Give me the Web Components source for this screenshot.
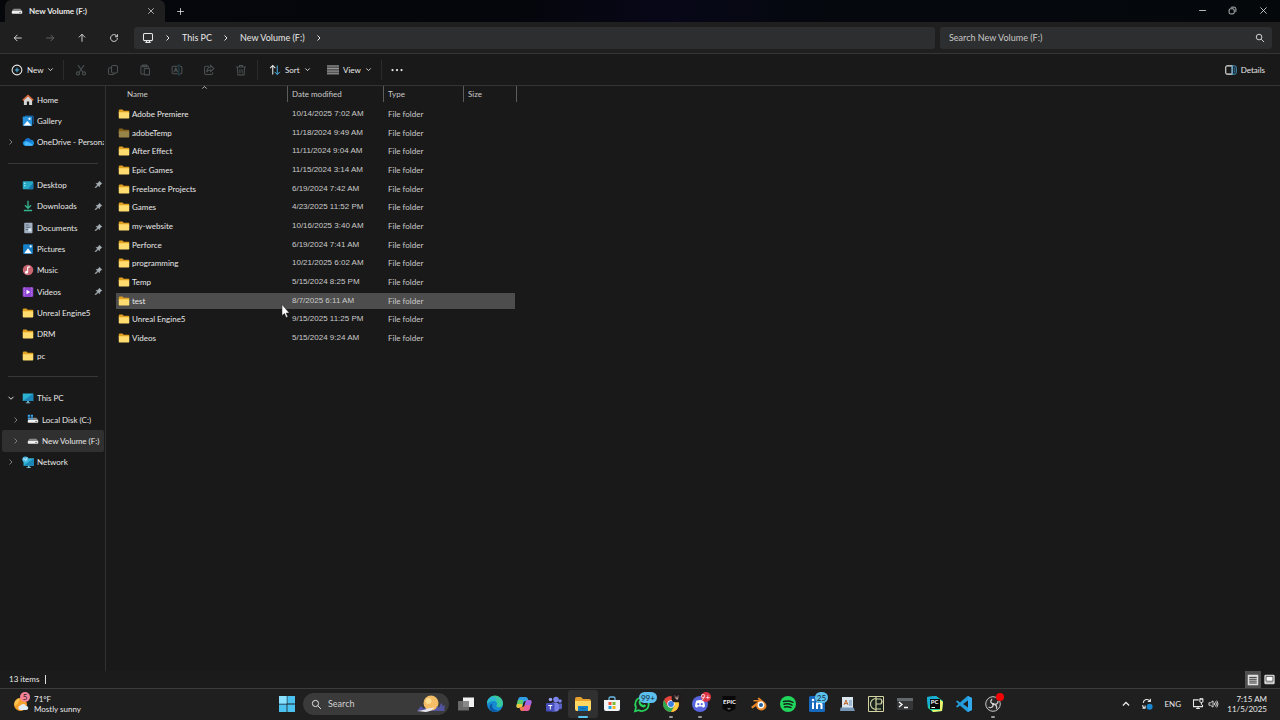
<!DOCTYPE html>
<html lang="en">
  <head>
    <meta charset="UTF-8" />
    <meta name="viewport" content="width=device-width, initial-scale=1.0" />
    <title>New Volume (F:)</title>
    <style>
      :root {
        --line: #343434;
        --panel: #191919;
        --bar: #1f1f1f;
        --field: #2d2e2f;
        --text: #e8e8e8;
        --dim: #cacaca;
        --small: 8px;
        --normal: 9px;
      }
      body {
        margin: 0;
        height: 100vh;
        display: flex;
        flex-direction: column;
        overflow: hidden;
        background: var(--panel);
        color: var(--text);
        font: var(--small) / 12px Lato, "Noto Sans", sans-serif;
      }
      main {
        flex: 1;
        min-height: 0;
        display: flex;
      }
      mouse-pointer {
        position: absolute;
        left: 281px;
        top: 304px;
      }
    </style>
  </head>
  <body>
    <title-bar></title-bar>
    <nav-bar></nav-bar>
    <command-bar></command-bar>
    <main>
      <side-nav></side-nav>
      <file-list></file-list>
    </main>
    <status-bar>13 items</status-bar>
    <task-bar></task-bar>
    <mouse-pointer></mouse-pointer>

    <script>
      const folder = `<path d="M1 3.500Q1 2 2.500 2H6l1.500 1.500H14q1 0 1 1V7H1z" fill="#e0a020"/><path d="M1 5.500h13q1 0 1 1V13q0 1-1 1H2q-1 0-1-1z" fill="#ffdc70"/>`;
      const screen = `<path d="M1 2h14v10H1z" fill="#2cb3d0"/><path d="M1 12 15 2v10z" fill="#1b87b8"/><path d="M7 12h2v2h2v1H5v-1h2z" fill="#86c8dc"/>`;
      const drive = `<path d="M3.500 5h9l2.500 3H1z" fill="#8b8b8b"/><rect x="1" y="8" width="14" height="3.500" rx="1" fill="#f0f0f0"/><path d="M11 9.300h2.500v1H11z" fill="#555"/>`;
      const picture = `<rect x="1.500" y="1.500" width="13" height="13" rx="1" fill="#1680c8"/><path d="M3 13.500 8 7l5 6.500z" fill="#fff"/><circle cx="11.500" cy="4.500" r="1.500" fill="#fff"/>`;

      // every drawing is on a 16x16 grid, line icons take currentColor
      const icons = {
        folder,
        screen,
        drive,
        picture,
        folderDim: `<g opacity=".55">${folder}</g>`,
        home: `<path d="M2.500 7v7.500h4V10h3v4.500h4V7L8 2.500z" fill="#d5d5d5"/><path d="M1 8.500 8 2l7 6.500" fill="none" stroke="#d8683c" stroke-width="2"/>`,
        gallery: `<path d="M4 1.500h10q1 0 1 1V12" fill="none" stroke="#165a9c" stroke-width="1.500"/><rect x="1" y="2" width="12.500" height="12.500" rx="1" fill="#2894df"/><path d="M2 14 7 8l5.500 6z" fill="#fff"/><circle cx="10" cy="5" r="1.500" fill="#fff"/>`,
        cloud: `<path d="M4 13a3.500 3.500 0 0 1-.5-6.800A4.500 4.500 0 0 1 11.500 5a4 4 0 0 1 1 8z" fill="#1490df"/><path d="M4 13a3.500 3.500 0 0 1 2.500-6l8.500 5q-1 1-2.500 1z" fill="#48b8ff"/><path d="M4 6a4.500 4.500 0 0 1 7.500-1L14 7.500 6.500 7z" fill="#1669c8"/>`,
        desktop: `<rect x="1" y="3" width="14" height="10.500" rx="1" fill="#27a9c4"/><path d="M8 13.500 15 5v7.500q0 1-1 1z" fill="#1677ae"/><path d="M3 5h1.500v1.500H3zM3 8h1.500v1.500H3z" fill="#c5f6ff"/>`,
        download: `<path d="M8 1v9.500M4 7l4 4 4-4M2.500 14h11" fill="none" stroke="#34b58d" stroke-width="1.800"/>`,
        document: `<rect x="3" y="1" width="11" height="14" rx="1" fill="#a2afbf"/><path d="M5 4h4M5 7h6M5 10h4" stroke="#52667d" stroke-width="1.200"/><path d="M8.500 8.500h4v4h-4z" fill="#dde8f2"/>`,
        music: `<circle cx="8" cy="8" r="7" fill="#c96672"/><path d="M7.500 11V4.500l3-1" fill="none" stroke="#fff" stroke-width="1.500"/><circle cx="6" cy="11" r="2" fill="#fff"/>`,
        video: `<rect x="1" y="1.500" width="14" height="13" rx="1.500" fill="#9146d3"/><path d="M3 2v12M13 2v12" stroke="#d4abf0" stroke-dasharray="1.500 1.500"/><path d="m6 5 5 3-5 3z" fill="#fff"/>`,
        system: `${drive}<path d="M1 1h3v2.500H1zM5 1h3v2.500H5zM1 4.500h3V7H1zM5 4.500h3V7H5z" fill="#3ba4ee"/>`,
        network: `<g transform="translate(1 1)">${screen}</g><circle cx="4.500" cy="4.500" r="4" fill="#4cb9e5"/><path d="M1 4h3l1 2 2-4" fill="none" stroke="#dff7ff"/>`,
        pin: `<path d="m9.500 2 4.500 4.500-1.500.5-2.200 2.200-.5 3-2.500-2.500L3 14l-1-1 4.300-4.300-2.500-2.500 3-.5L9 3.500z" fill="#a7b0b4" stroke="#a7b0b4"/>`,
        left: `<path d="M14 8H2m5-5L2 8l5 5" class="line"/>`,
        right: `<path d="M2 8h12M9 3l5 5-5 5" class="line"/>`,
        up: `<path d="M8 14V2M3 7l5-5 5 5" class="line"/>`,
        reload: `<path d="M13.500 8a5.500 5.500 0 1 1-2-4.200L13.500 6M13.500 2v4h-4" class="line"/>`,
        chevronRight: `<path d="m5 3 5 5-5 5" class="line bold"/>`,
        chevronDown: `<path d="m3 5.500 5 5 5-5" class="line bold"/>`,
        chevronUp: `<path d="m3 10.500 5-5 5 5" class="line bold"/>`,
        close: `<path d="m2.500 2.500 11 11m0-11-11 11" class="line"/>`,
        plus: `<path d="M8 2v12M2 8h12" class="line"/>`,
        minus: `<path d="M2 8h12" class="line"/>`,
        restore: `<rect x="2" y="5" width="9" height="9" rx="2" class="line"/><path d="M5 3q.5-1 2-1h4q3 0 3 3v4q0 1.500-1 2" class="line"/>`,
        search: `<circle cx="6.500" cy="6.500" r="4.500" class="line"/><path d="m10 10 4.500 4.500" class="line"/>`,
        monitor: `<rect x="2" y="2" width="12" height="9.500" rx="1.500" class="line"/><path d="M6 11.500V14M10 11.500V14M4.500 14h7" class="line"/>`,
        add: `<circle cx="8" cy="8" r="6.500" class="line"/><path d="M8 5v6M5 8h6" stroke="#4db2e8" stroke-width="1.400"/>`,
        cut: `<path d="M4 1.500 10.500 11M12 1.500 5.500 11" class="line"/><circle cx="4" cy="12.500" r="2" class="line"/><circle cx="12" cy="12.500" r="2" class="line"/>`,
        copy: `<rect x="6" y="2" width="8" height="10" rx="2" class="line"/><path d="M6 5H4Q2 5 2 7v5q0 2 2 2h4q2 0 2-2" class="line"/>`,
        paste: `<path d="M6 13.500H4q-1.500 0-1.500-1.500V4Q2.500 2.500 4 2.500h1m5 0h1q1.500 0 1.500 1.500v1M5 1.500h5v2H5z" class="line"/><rect x="7" y="6" width="7" height="8.500" rx="1" class="line"/>`,
        rename: `<path d="M9 3H3Q1.500 3 1.500 4.500v7Q1.500 13 3 13h6m3-10h1q1.500 0 1.500 1.500v7q0 1.500-1.500 1.500h-1M4 11l2.500-6L9 11M5 9h3" class="line"/><path d="M9 1.500h3m-1.500 0v13M9 14.500h3" stroke="#215866" fill="none"/>`,
        share: `<path d="M8 3H4Q2 3 2 5v7q0 2 2 2h7q2 0 2-2v-1M10 2l4.500 4L10 10V8q-4 0-5 3 0-6 5-7z" class="line"/>`,
        trash: `<path d="M1.500 4h13M6 4V2h4v2M3 4l1 10.500h8L13 4M6.500 7v5M9.500 7v5" class="line"/>`,
        sort: `<path d="M5 14V2M1.500 5.500 5 2l3.500 3.500" class="line"/><path d="M11 2v12m-3.500-3.500L11 14l3.500-3.500" fill="none" stroke="#4db2e8" stroke-width="1.300"/>`,
        view: `<path d="M0 2h16v12H0z" fill="#555"/><path d="M0 2.500h16M0 6h16M0 9.500h16M0 13h16" stroke="#aaa"/>`,
        dots: `<g fill="currentColor"><circle cx="2" cy="8" r="1.500"/><circle cx="8" cy="8" r="1.500"/><circle cx="14" cy="8" r="1.500"/></g>`,
        details: `<path d="M9.500 2.500H3Q1 2.500 1 4.500v7q0 2 2 2h6.500z" class="line"/><path d="M9.500 2.500H13q2 0 2 2v7q0 2-2 2H9.500zM11.500 5.500h1.800M11.500 8h1.800M11.500 10.500h1.800" fill="none" stroke="#45a6d8" stroke-width="1.200"/>`,
        list: `<rect x="1" y="1" width="14" height="14" fill="#e0e0e0"/><path d="M3 4.500h10M3 7h10M3 9.500h10M3 12h10" stroke="#222" stroke-width="1.200"/>`,
        tiles: `<rect x="1.500" y="2" width="13" height="12" rx="1" fill="#fff" stroke="#d6d6d6" stroke-width="2"/><path d="M3 3.500h10v7H3z" fill="none" stroke="#222"/><path d="M3 12.500h10" stroke="#888"/>`,
        sync: `<path d="M3 6.500a5 5 0 0 1 9-2.500M12.500 1v3.500H9M2 9.500a5 5 0 0 0 3 4M2 13.500h3.500V10" class="line"/><circle cx="11.500" cy="11.500" r="4" fill="#1987cf"/>`,
        ethernet: `<path d="M9 2.500H2v9h12V9M5.500 14h5M8 11.500V14M12.500 6v3M10.500 1.500h4V5q-2 2-4 0zM11.500 0v2M13.500 0v2" class="line"/>`,
        speaker: `<path d="M1.500 6H4l4-3v10l-4-3H1.500z" class="line"/><path d="M10 6q1.500 2 0 4M12 4q3 4 0 8M14 2.500q4 5.500 0 11" class="line"/>`,
        weather: `<circle cx="7.500" cy="8.500" r="6.500" fill="#f5a02d"/><path d="M1.500 10a6.500 6.500 0 0 1 5-8q0 6-5 8z" fill="#ffc34d"/><path d="M7 14a2.300 2.300 0 0 1 .5-4.500 3 3 0 0 1 5.500.5 2 2 0 0 1 .5 4z" fill="#e2ecf7"/>`,
        start: `<path d="M0 0h7.600v7.600H0zM8.400 0H16v7.600H8.400zM0 8.400h7.600V16H0zM8.400 8.400H16V16H8.400z" fill="#4cc2f1"/><path d="M0 0h7.600v7.600H0z" fill="#8be2ff"/>`,
        taskview: `<rect x="5" y="1.500" width="11" height="9.500" fill="#f1f1f1"/><rect x="0" y="5" width="11" height="9.500" fill="#777" opacity=".85"/>`,
        edge: `<circle cx="8" cy="8" r="8" fill="#168bd2"/><path d="M0 8a8 8 0 0 1 16-1c.3 3-2 4.500-4.500 4.200-2-.2-2.500-1.200-1.700-2.200C11 7 9 4.800 6.500 5 3 5 .5 7 0 8z" fill="#39c99c"/><path d="M0 8a8 8 0 0 1 5-7.400C9 1 11 4 9 5 3 4 1 6 0 8z" fill="#2cb8d4"/><path d="M6 7.500c-2.500 2.500 0 7 5.500 7q-3 2-6 1C1 13 2 8 6 7.500z" fill="#0c56a3"/>`,
        copilot: `<path d="M4.500 1h5q2 0 2.500 2l.5 2H9.500q-1.500 0-2 1.500L6 11q-.5 1-2 1H2.500Q0 12 .7 9l1.500-6q.5-2 2.300-2z" fill="#2f9fe8"/><path d="M2 4h5.500L6 11q-.5 1-2 1H2.500Q0 12 .7 9z" fill="#5fcb68"/><path d="M1 8h5.500L6 11q-.5 1-2 1H2.500Q0 12 .7 9z" fill="#e9c840"/><path d="M11.500 15h-5q-2 0-2.500-2l-.5-2h3q1.500 0 2-1.500L10 5q.5-1 2-1h1.500q2.500 0 1.800 3l-1.500 6q-.5 2-2.300 2z" fill="#e65f9a"/><path d="M10 5q.5-1 2-1h1.500q2.500 0 1.800 3l-.5 2H8.700z" fill="#a067e6"/><path d="M3.500 11h3q1.500 0 2-1.500L8 13.500 6 15q-1.500 0-2-2z" fill="#f07a4a"/>`,
        teams: `<circle cx="10" cy="3.500" r="2.800" fill="#7d85ed"/><circle cx="4.500" cy="3.500" r="1.800" fill="#9aa0f2"/><circle cx="14" cy="5" r="1.800" fill="#7d85ed"/><rect x="4" y="6.500" width="9" height="9" rx="3" fill="#777fe6"/><path d="M13 7.500h3V12q-1 2-3 1z" fill="#5961c6"/><rect x="0" y="7" width="8.500" height="8.500" rx="1" fill="#454eb9"/><path d="M2.300 9.500h4M4.300 9.500v4" stroke="#fff"/>`,
        explorer: `<path d="M0 3q0-2 2-2h4l2 2h6q2 0 2 2v4H0z" fill="#e7a12c"/><path d="M0 5h16v8q0 2-2 2H2q-2 0-2-2z" fill="#ffd762"/><path d="M3 10h10v5H3z" fill="#1681cb"/><path d="M5.500 12.500h5" stroke="#1268a8"/>`,
        store: `<path d="M5 5V2.500Q5 1 6.500 1h3Q11 1 11 2.500V5" fill="none" stroke="#6cbbe9" stroke-width="1.300"/><path d="M0 4h16v9q0 2-2 2H2q-2 0-2-2z" fill="#f2f3f4"/><path d="M4.500 6h3v3h-3z" fill="#ef5032"/><path d="M8.500 6h3v3h-3z" fill="#7eba2d"/><path d="M4.500 10h3v3h-3z" fill="#209fe2"/><path d="M8.500 10h3v3h-3z" fill="#f6b81c"/>`,
        whatsapp: `<path d="M1 15.200 2 11.500a6.800 6.800 0 1 1 2.700 2.700z" fill="none" stroke="#28d35b" stroke-width="1.700"/><path d="M5 4.500q1.500-1 2 1l-.5 1q1 2 3 2.500l1-.8 1.500 1.300q-.5 2-2.500 2Q5 10.500 4.500 6z" fill="#28d35b"/>`,
        chrome: `<circle cx="8" cy="8" r="8" fill="#e8453c"/><path d="M1.100 4A8 8 0 0 0 8 16l3.500-6H4.500z" fill="#2da94f"/><path d="M8 16a8 8 0 0 0 6.900-12H8l3.500 6z" fill="#fdca3a"/><circle cx="8" cy="8" r="3.700" fill="#fff"/><circle cx="8" cy="8" r="2.900" fill="#3d7ddf"/>`,
        profile: `<rect x="1" y="1" width="14" height="14" rx="5" fill="#211a1c"/><path d="m4 4 4 2 4-2-1 5-5 1z" fill="#5d4b49"/><path d="m6 8 3 4 2-4" fill="#c0a394"/>`,
        discord: `<circle cx="8" cy="8" r="8" fill="#5865dc"/><path d="M4.500 4.500Q8 3.500 11.500 4.500 13 7 13 10.500l-2 1.300-1-1.300H6l-1 1.300-2-1.300Q3 7 4.500 4.500z" fill="#fff"/><circle cx="6.300" cy="8.200" r="1.100" fill="#5865dc"/><circle cx="9.700" cy="8.200" r="1.100" fill="#5865dc"/>`,
        epic: `<path d="M1.500 0h13v13L8 16l-6.500-3z" fill="#080808"/><path d="M6 12.500h4l-2 1z" fill="#ddd"/>`,
        blender: `<path d="M0 11 7 5.500H2.500V4H8L6.500 2.500 8 1.500l6 5q3 3.500 0 6.500-4 3-8-.5L5 10l-3.500 2.500z" fill="#e98728"/><circle cx="10" cy="9" r="3.400" fill="#fff"/><circle cx="10" cy="9" r="2" fill="#235e9d"/>`,
        spotify: `<circle cx="8" cy="8" r="8" fill="#21d65d"/><path d="M3.500 5.500q5-1.500 9.500.8M4 8.300q4-1.200 8 .8M4.500 11q3.500-1 6.500.7" fill="none" stroke="#142318" stroke-width="1.500" stroke-linecap="round"/>`,
        linkedin: `<rect width="16" height="16" rx="1.500" fill="#1769bd"/><path d="M3 6.500h2V13H3zM7 6.500h2v1q2.500-2.500 4.500.5v5h-2V9q-1.500-2-2.500 0v4H7z" fill="#fff"/><circle cx="4" cy="4" r="1.300" fill="#fff"/>`,
        notepad: `<path d="M3 1h11v11H3z" fill="#d9e6ef"/><path d="M1.500 11.500h13L16 15H1z" fill="#7795b5"/><path d="m5 9 2-5 2 5M5.500 7.500h3" stroke="#c06b2f" fill="none"/><path d="M10 5h3M10 7h3M10 9h3" stroke="#638ab2"/>`,
        clip: `<path d="M.5.500h15v15H.5z" fill="#17231c" stroke="#d5d2a5"/><path d="M8 2.500a5.500 5.500 0 1 0 0 11M8 1v14M8 3h5M8 8h5M8 13h5M13 3q2 2.500 0 5" fill="none" stroke="#d5d2a5" stroke-width="1.200"/>`,
        terminal: `<rect y="2" width="16" height="12" rx="1" fill="#343638"/><path d="M0 2h16v3H0z" fill="#64676b"/><path d="m2 6 3 2.500L2 11M7 11.500h4" fill="none" stroke="#fff" stroke-width="1.300"/>`,
        pycharm: `<path d="M0 1 9 0l7 5-1 10-9 1-5-4z" fill="#25d4a0"/><path d="M0 1 9 0l3 3-9 5-2 4z" fill="#16aed9"/><path d="m12 3 4 3-1 9-9 1-1-2h8z" fill="#eff36b"/><rect x="3" y="3" width="10" height="10" fill="#080808"/><path d="M4.500 11.500H8" stroke="#fff"/>`,
        vscode: `<path d="M11.500 0 16 2v12l-4.500 2L4 9.500 1.500 11.500 0 10.500 2.500 8 0 5.500l1.500-1L4 6.500zM12 4.500 7 8l5 3.500z" fill="#249ddd" fill-rule="evenodd"/><path d="M12 0 16 2v12l-4 2z" fill="#31a9ee"/>`,
        obs: `<circle cx="8" cy="8" r="7.300" fill="#282828" stroke="#c8c8c8"/><path d="M7 3q-3 4 1.500 5Q13 9 13 5M8.500 8q-1 5-5 3M8.500 8q4 1 3 5" fill="none" stroke="#c8c8c8" stroke-width="1.300"/><circle cx="8" cy="8" r="1" fill="#ddd"/>`,
      };

      class FxIcon extends HTMLElement {
        connectedCallback() {
          const shadow = this.attachShadow({ mode: "open" });
          const size = this.getAttribute("size") || 12;
          shadow.innerHTML = `
            <style>
              :host { display: inline-block; flex: none; width: ${size}px; height: ${size}px; }
              svg { display: block; width: 100%; height: 100%; overflow: visible; }
              .line { fill: none; stroke: currentColor; stroke-width: 1.400; }
              .bold { stroke-width: 2; }
            </style>
            <svg viewBox="0 0 16 16" aria-hidden="true">${icons[this.getAttribute("name")]}</svg>
          `;
        }
      }
      customElements.define("fx-icon", FxIcon);

      const icon = (name, size = 12) => `<fx-icon name="${name}" size="${size}"></fx-icon>`;

      const controls = `
        * { box-sizing: border-box; }
        button, input {
          border: 0;
          padding: 0;
          margin: 0;
          background: none;
          color: inherit;
          font: inherit;
        }
        button { display: flex; align-items: center; justify-content: center; }
        a { color: inherit; text-decoration: none; }
      `;

      class TitleBar extends HTMLElement {
        constructor() {
          super();
          this.attachShadow({ mode: "open" }).innerHTML = `
            <style>
              ${controls}
              :host {
                display: flex;
                height: 22px;
                padding-left: 5px;
                background: linear-gradient(90deg, #05070b, #05060b 40%, #070718 52%, #05080d 65%, #05080b);
              }
              .tab {
                display: flex;
                align-items: center;
                width: 160px;
                padding: 0 8px 0 6px;
                gap: 6px;
                border-radius: 6px 6px 0 0;
                background: var(--bar);
                font-weight: 700;
              }
              .tab span { flex: 1; }
              .tab button { width: 12px; height: 12px; }
              .new { width: 30px; }
              .window { display: flex; margin-left: auto; height: 20px; }
              .window button { width: 30px; }
              .window button:last-child { width: 32px; }
              .window { padding-right: 1px; }
            </style>
            <div class="tab">${icon("drive")}<span>New Volume (F:)</span><button aria-label="Close tab">${icon("close", 8)}</button></div>
            <button class="new" aria-label="New tab">${icon("plus", 9)}</button>
            <div class="window">
              <button aria-label="Minimize">${icon("minus", 9)}</button>
              <button aria-label="Restore">${icon("restore", 9)}</button>
              <button aria-label="Close">${icon("close", 9)}</button>
            </div>
          `;
        }
      }
      customElements.define("title-bar", TitleBar);

      class NavBar extends HTMLElement {
        constructor() {
          super();
          this.attachShadow({ mode: "open" }).innerHTML = `
            <style>
              ${controls}
              :host {
                display: flex;
                align-items: center;
                height: 32px;
                box-sizing: border-box;
                padding: 0 8px 0 2px;
                background: var(--bar);
                border-bottom: 1px solid var(--line);
                font-size: var(--normal);
              }
              .go { width: 32px; height: 22px; }
              .go:disabled { color: #6c6c6c; }
              .address, .search {
                display: flex;
                align-items: center;
                height: 22px;
                border-radius: 3px;
                background: var(--field);
              }
              .address { flex: 1; margin-left: 4px; padding-left: 8px; gap: 10px; }
              .search { width: 332px; margin-left: 5px; padding: 0 7px 0 9px; }
              input { flex: 1; min-width: 0; outline: 0; }
              input::placeholder { color: #c8c8c8; opacity: 1; }
            </style>
            <button class="go" aria-label="Back">${icon("left", 10)}</button>
            <button class="go" aria-label="Forward" disabled>${icon("right", 10)}</button>
            <button class="go" aria-label="Up">${icon("up", 10)}</button>
            <button class="go" aria-label="Refresh">${icon("reload", 10)}</button>
            <nav class="address" aria-label="Address">
              ${icon("monitor")}${icon("chevronRight", 8)}
              <a href="#pc">This PC</a>${icon("chevronRight", 8)}
              <a href="#f">New Volume (F:)</a>${icon("chevronRight", 8)}
            </nav>
            <label class="search">
              <input type="text" placeholder="Search New Volume (F:)" aria-label="Search New Volume (F:)" />
              ${icon("search", 10)}
            </label>
          `;
        }
      }
      customElements.define("nav-bar", NavBar);

      class CommandBar extends HTMLElement {
        constructor() {
          super();
          const tools = ["cut", "copy", "paste", "rename", "share", "trash"];
          this.attachShadow({ mode: "open" }).innerHTML = `
            <style>
              ${controls}
              :host {
                display: flex;
                align-items: center;
                height: 32px;
                box-sizing: border-box;
                padding: 0 15px 0 6px;
                border-bottom: 1px solid var(--line);
              }
              button { height: 24px; gap: 4px; }
              .new, .sort, .view { justify-content: start; }
              .new { width: 57px; padding-left: 5px; }
              .tool { width: 32px; color: #4b5052; }
              .sort { width: 58px; padding-left: 10px; }
              .view { width: 64px; padding-left: 10px; }
              .more { width: 28px; }
              .details { margin-left: auto; }
              i { width: 1px; height: 20px; margin-right: 1px; background: #2b2b2b; }
            </style>
            <button class="new">${icon("add")}New${icon("chevronDown", 7)}</button>
            <i></i>
            ${tools.map((name) => `<button class="tool" aria-label="${name}" disabled>${icon(name)}</button>`).join("")}
            <i></i>
            <button class="sort">${icon("sort")}Sort${icon("chevronDown", 7)}</button>
            <button class="view">${icon("view")}View${icon("chevronDown", 7)}</button>
            <i></i>
            <button class="more" aria-label="See more">${icon("dots")}</button>
            <button class="details">${icon("details")}Details</button>
          `;
        }
      }
      customElements.define("command-bar", CommandBar);

      class SideItem extends HTMLElement {
        connectedCallback() {
          const open = this.getAttribute("open");
          const arrow = open === null ? "" : icon(open === "yes" ? "chevronDown" : "chevronRight", 8);
          this.attachShadow({ mode: "open" }).innerHTML = `
            <style>
              ${controls}
              :host { display: flex; min-width: 0; margin: 0 1px 0 2px; }
              :host([selected]) { background: #303030; border-radius: 2px; }
              a { flex: 1; min-width: 0; display: flex; align-items: center; padding-left: 5px; }
              :host([nested]) a { padding-left: 10px; }
              .arrow { display: flex; width: 15px; color: #7c7c7c; }
              .arrow.yes { color: #ddd; }
              .label { flex: 1; min-width: 0; margin-left: 3px; overflow: hidden; white-space: nowrap; }
              .pin { display: flex; margin-right: 1px; }
            </style>
            <a href="#">
              <span class="arrow ${open}">${arrow}</span>${icon(this.getAttribute("icon"))}
              <span class="label"><slot></slot></span>
              ${this.hasAttribute("pinned") ? `<span class="pin">${icon("pin", 9)}</span>` : ""}
            </a>
          `;
        }
      }
      customElements.define("side-item", SideItem);

      class SideNav extends HTMLElement {
        constructor() {
          super();
          this.attachShadow({ mode: "open" }).innerHTML = `
            <style>
              :host {
                display: block;
                flex: none;
                width: 105px;
                padding-top: 3px;
                border-right: 1px solid #303030;
              }
              nav {
                display: grid;
                grid-auto-rows: 1fr;
                height: 384px;
              }
              hr { align-self: center; width: 90px; margin: 0 0 0 8px; border: 0; border-top: 1px solid #383838; }
            </style>
            <nav>
              <side-item icon="home">Home</side-item>
              <side-item icon="gallery">Gallery</side-item>
              <side-item icon="cloud" open="no">OneDrive - Persona</side-item>
              <hr />
              <side-item icon="desktop" pinned>Desktop</side-item>
              <side-item icon="download" pinned>Downloads</side-item>
              <side-item icon="document" pinned>Documents</side-item>
              <side-item icon="picture" pinned>Pictures</side-item>
              <side-item icon="music" pinned>Music</side-item>
              <side-item icon="video" pinned>Videos</side-item>
              <side-item icon="folder">Unreal Engine5</side-item>
              <side-item icon="folder">DRM</side-item>
              <side-item icon="folder">pc</side-item>
              <hr />
              <side-item icon="screen" open="yes">This PC</side-item>
              <side-item icon="system" open="no" nested>Local Disk (C:)</side-item>
              <side-item icon="drive" open="no" nested selected>New Volume (F:)</side-item>
              <side-item icon="network" open="no">Network</side-item>
            </nav>
          `;
        }
      }
      customElements.define("side-nav", SideNav);

      const files = [
        ["Adobe Premiere", "10/14/2025 7:02 AM"],
        ["adobeTemp", "11/18/2024 9:49 AM", "folderDim"],
        ["After Effect", "11/11/2024 9:04 AM"],
        ["Epic Games", "11/15/2024 3:14 AM"],
        ["Freelance Projects", "6/19/2024 7:42 AM"],
        ["Games", "4/23/2025 11:52 PM"],
        ["my-website", "10/16/2025 3:40 AM"],
        ["Perforce", "6/19/2024 7:41 AM"],
        ["programming", "10/21/2025 6:02 AM"],
        ["Temp", "5/15/2024 8:25 PM"],
        ["test", "8/7/2025 6:11 AM"],
        ["Unreal Engine5", "9/15/2025 11:25 PM"],
        ["Videos", "5/15/2024 9:24 AM"],
      ];

      class FileList extends HTMLElement {
        constructor() {
          super();
          const rows = files.map(([name, date, glyph = "folder"]) => `
            <tr class="${name === "test" ? "hover" : ""}">
              <td><span class="name">${icon(glyph)}${name}</span></td>
              <td class="date">${date}</td><td>File folder</td><td></td>
            </tr>`);
          this.attachShadow({ mode: "open" }).innerHTML = `
            <style>
              :host { display: block; flex: 1; padding-left: 10px; }
              table { table-layout: fixed; width: 401px; height: 262px; border-collapse: separate; border-spacing: 0; }
              th, td { box-sizing: border-box; padding: 0 0 0 4px; text-align: left; white-space: nowrap; }
              th { height: 19px; padding-bottom: 4px; font-weight: 400; color: var(--dim); position: relative; }
              th::after { content: ""; position: absolute; right: 0; top: 0; width: 1px; height: 16px; background: #5c5c5c; }
              th:first-child { padding-left: 11px; }
              th fx-icon { position: absolute; left: 85px; top: -2px; }
              td { color: var(--dim); border: 0 solid transparent; border-width: 1px 0 2px; background-clip: padding-box; }
              td:first-child { padding-left: 2px; color: var(--text); }
              td:last-child { border-right-width: 2px; }
              .date { font-family: "Liberation Sans", sans-serif; }
              .hover td { background-color: #4d4d4d; }
              .name { display: flex; align-items: center; gap: 2px; }
            </style>
            <table>
              <colgroup><col style="width: 172px" /><col style="width: 96px" /><col style="width: 80px" /><col /></colgroup>
              <thead><tr><th>Name${icon("chevronUp", 7)}</th><th>Date modified</th><th>Type</th><th>Size</th></tr></thead>
              <tbody>${rows.join("")}</tbody>
            </table>
          `;
        }
      }
      customElements.define("file-list", FileList);

      class StatusBar extends HTMLElement {
        constructor() {
          super();
          this.attachShadow({ mode: "open" }).innerHTML = `
            <style>
              ${controls}
              :host { display: flex; align-items: center; height: 17px; padding: 0 3px 0 9px; background: #1b1b1b; }
              .count { padding-right: 6px; border-right: 1px solid #ddd; line-height: 9px; }
              .modes { display: flex; margin-left: auto; height: 100%; }
              button { width: 16px; }
              .on { background: #505050; }
            </style>
            <span class="count"><slot></slot></span>
            <div class="modes">
              <button class="on" aria-label="Details view">${icon("list")}</button>
              <button aria-label="Large icons">${icon("tiles", 11)}</button>
            </div>
          `;
        }
      }
      customElements.define("status-bar", StatusBar);

      // icon, badge text, badge kind, running mark
      const apps = [
        ["taskview"], ["edge"], ["copilot"], ["teams"],
        ["explorer", "", "", "active"],
        ["store"],
        ["whatsapp", "99+", "blue"],
        ["chrome", icon("profile", 11), "face", "running"],
        ["discord", "9+", "red", "running"],
        ["epic"], ["blender"], ["spotify"],
        ["linkedin", "25", "blue"],
        ["notepad"], ["clip"], ["terminal"], ["pycharm"], ["vscode"],
        ["obs", " ", "rec", "running"],
      ];
      const lettering = { epic: "EPIC", pycharm: "PC" };

      class TaskBar extends HTMLElement {
        constructor() {
          super();
          const buttons = apps.map(([name, badge, kind, state = ""]) => `
            <button class="app ${name} ${state}" aria-label="${name}">
              ${icon(name, 16)}
              ${lettering[name] ? `<b>${lettering[name]}</b>` : ""}
              ${badge ? `<span class="badge ${kind}">${badge}</span>` : ""}
            </button>`);
          this.attachShadow({ mode: "open" }).innerHTML = `
            <style>
              ${controls}
              :host {
                display: grid;
                grid-template-columns: 1fr auto 1fr;
                height: 32px;
                box-sizing: border-box;
                padding-bottom: 1px;
                border-top: 1px solid #3c3c3c;
                background: var(--bar);
              }
              .weather { justify-content: start; justify-self: start; text-align: left; padding-left: 13px; gap: 5px; line-height: 10px; }
              .sun, .app { position: relative; }
              .sun { display: flex; }
              .badge {
                position: absolute;
                display: grid;
                place-items: center;
                left: 7px;
                top: -4px;
                height: 10px;
                min-width: 10px;
                border-radius: 5px;
                background: #f5829a;
                color: #321;
                line-height: 10px;
              }
              .center { display: flex; align-items: center; }
              .start { width: 30px; height: 30px; }
              .search {
                display: flex;
                align-items: center;
                width: 146px;
                height: 22px;
                margin: 0 2px 0 1px;
                padding: 0 3px 0 8px;
                gap: 6px;
                border-radius: 11px;
                background: #3a3a3a;
                font-size: var(--normal);
              }
              .search input { flex: 1; min-width: 0; outline: 0; }
              .search input::placeholder { color: #d0d0d0; opacity: 1; }
              .search svg { width: 30px; height: 18px; }
              .apps { display: flex; width: 557px; height: 28px; }
              .app { flex: 1; border-radius: 3px; }
              .app.active { background: #303030; }
              .app.active::after, .app.running::after {
                content: "";
                position: absolute;
                bottom: 0;
                width: 4px;
                height: 2px;
                border-radius: 1px;
                background: #9a9a9a;
              }
              .app.active::after { width: 10px; background: #5cc4f3; }
              .app .badge { left: 15px; top: 2px; }
              .app .blue { left: 12px; top: 2px; height: 11px; padding: 0 2px; border-radius: 6px; background: #5bc0ee; color: #102a38; }
              .app .red { background: #dc3445; color: #fff; }
              .app .face { background: none; }
              .app .rec { background: #f00505; min-width: 8px; height: 8px; left: 17px; top: 3px; }
              b { position: absolute; top: 9px; color: #fff; font-size: 6px; line-height: 6px; }
              .tray { display: flex; align-items: center; justify-self: end; padding-right: 13px; text-align: right; line-height: 10px; }
              .tray button { height: 24px; }
              .tray .up { width: 20px; }
              .tray .sync { width: 22px; }
              .tray .lang { width: 29px; }
              .tray .net { width: 35px; gap: 4px; margin-right: 5px; }
            </style>
            <button class="weather">
              <span class="sun">${icon("weather", 16)}<span class="badge">5</span></span>
              <span>71°F<br />Mostly sunny</span>
            </button>
            <div class="center">
              <button class="start" aria-label="Start">${icon("start", 16)}</button>
              <label class="search">
                ${icon("search", 11)}<input type="text" placeholder="Search" aria-label="Search" />
                <svg viewBox="0 0 30 18" aria-hidden="true">
                  <path d="M1 16 5 11l3 3 3-4 4 5 6-5 2 3 3-5 1 5 2 3z" fill="#5354a0" />
                  <circle cx="15" cy="8" r="7.500" fill="#f4bd66" />
                  <circle cx="12.500" cy="6" r="3" fill="#ffdd91" />
                  <path d="M20 15l1-4 2 2 2-5 1 4 3-2-1 6H18z" fill="#5354a0" />
                  <path d="M1 16q8-1 12-3 2 1 5-1-1 4-8 5z" fill="#e9e5ed" />
                </svg>
              </label>
              <div class="apps">${buttons.join("")}</div>
            </div>
            <div class="tray">
              <button class="up" aria-label="Hidden icons">${icon("chevronUp", 10)}</button>
              <button class="sync" aria-label="Sync">${icon("sync")}</button>
              <button class="lang">ENG</button>
              <button class="net" aria-label="Network and volume">${icon("ethernet")}${icon("speaker", 10)}</button>
              <time>7:15 AM<br />11/5/2025</time>
            </div>
          `;
        }
      }
      customElements.define("task-bar", TaskBar);

      class MousePointer extends HTMLElement {
        constructor() {
          super();
          this.attachShadow({ mode: "open" }).innerHTML = `
            <style>:host, svg { display: block; pointer-events: none; }</style>
            <svg width="9" height="14" viewBox="0 0 9 14" aria-hidden="true">
              <path d="M1 .5v11l2.500-2 1.700 4 1.600-.8-1.700-3.700h3.200z" fill="#fff" stroke="#222" stroke-width=".5" />
            </svg>
          `;
        }
      }
      customElements.define("mouse-pointer", MousePointer);
    </script>
  </body>
</html>
